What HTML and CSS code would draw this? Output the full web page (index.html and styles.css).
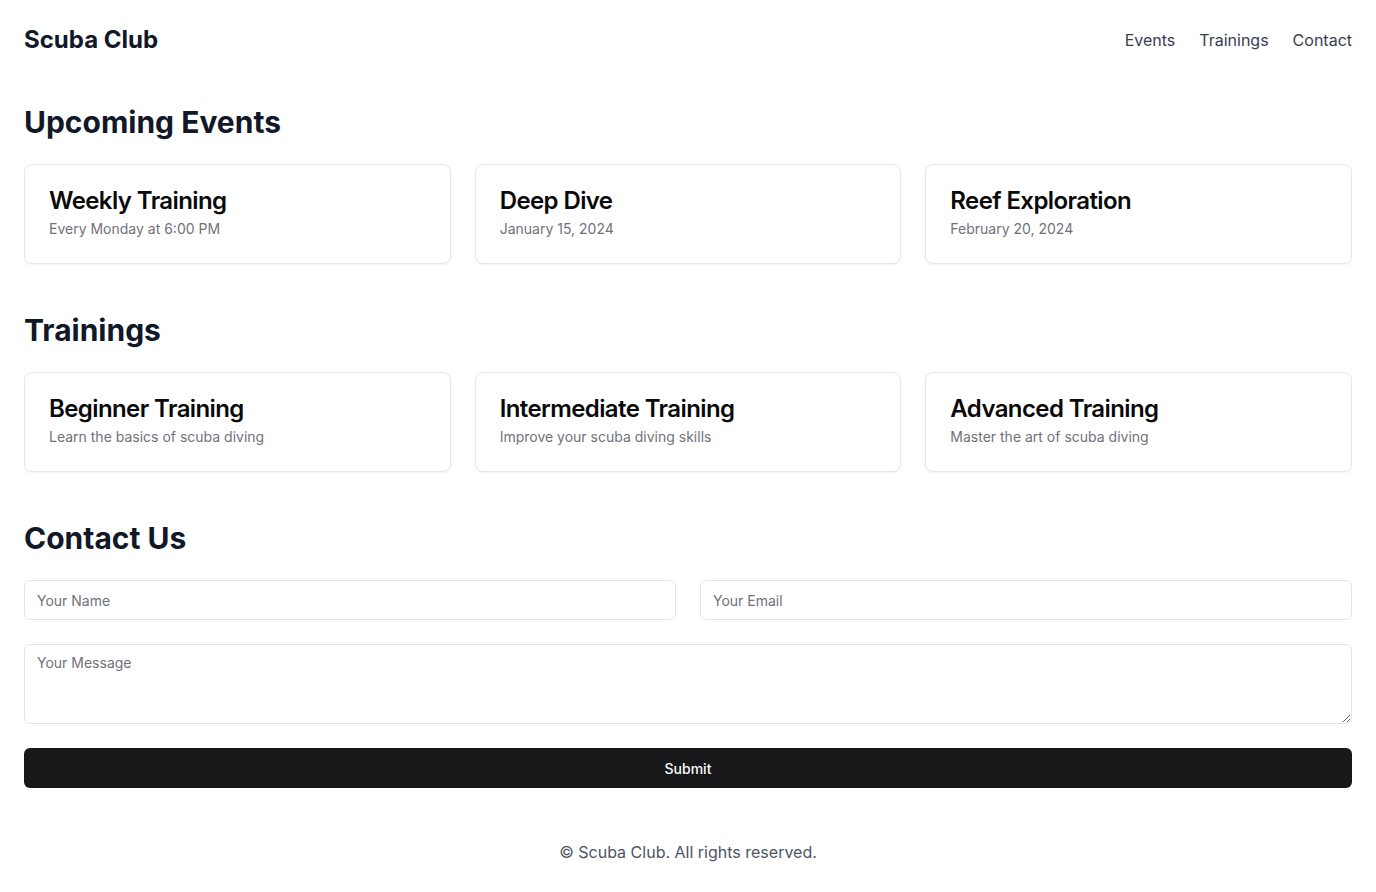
FILE: index.html
```html
<!DOCTYPE html>
<html lang="en">
<head>
<meta charset="utf-8">
<title>Scuba Club</title>
<link rel="stylesheet" href="styles.css">
</head>
<body>
<header class="site-header">
  <h1 class="brand">Scuba Club</h1>
  <nav class="nav">
    <a href="#events">Events</a>
    <a href="#trainings">Trainings</a>
    <a href="#contact">Contact</a>
  </nav>
</header>
<main class="main">
  <section class="section" id="events">
    <h2 class="section-title">Upcoming Events</h2>
    <div class="card-grid">
      <div class="card"><h3 class="card-title">Weekly Training</h3><p class="card-desc">Every Monday at 6:00 PM</p></div>
      <div class="card"><h3 class="card-title">Deep Dive</h3><p class="card-desc">January 15, 2024</p></div>
      <div class="card"><h3 class="card-title">Reef Exploration</h3><p class="card-desc">February 20, 2024</p></div>
    </div>
  </section>
  <section class="section" id="trainings">
    <h2 class="section-title">Trainings</h2>
    <div class="card-grid">
      <div class="card"><h3 class="card-title">Beginner Training</h3><p class="card-desc">Learn the basics of scuba diving</p></div>
      <div class="card"><h3 class="card-title">Intermediate Training</h3><p class="card-desc">Improve your scuba diving skills</p></div>
      <div class="card"><h3 class="card-title">Advanced Training</h3><p class="card-desc">Master the art of scuba diving</p></div>
    </div>
  </section>
  <section class="section" id="contact">
    <h2 class="section-title">Contact Us</h2>
    <form class="form">
      <div class="form-row">
        <input class="field" type="text" placeholder="Your Name">
        <input class="field" type="email" placeholder="Your Email">
      </div>
      <textarea class="field textarea" placeholder="Your Message"></textarea>
      <button class="submit" type="button">Submit</button>
    </form>
  </section>
</main>
<footer class="footer">
  <p>© Scuba Club. All rights reserved.</p>
</footer>
</body>
</html>
```
FILE: styles.css
```css
* { box-sizing: border-box; }
html, body { margin: 0; padding: 0; }
body {
  font-family: Inter, "Noto Sans", sans-serif;
  color: #111827;
  background: #ffffff;
}
.site-header {
  display: flex;
  justify-content: space-between;
  align-items: center;
  padding: 24px 24px;
}
.brand {
  margin: 0;
  font-size: 24px;
  line-height: 32px;
  font-weight: 700;
  color: #111827;
}
.nav {
  display: flex;
  gap: 24px;
}
.nav a {
  color: #374151;
  text-decoration: none;
  font-size: 16px;
  line-height: 24px;
}
.main {
  padding: 24px 24px 24px;
  display: flex;
  flex-direction: column;
  gap: 48px;
}
.section-title {
  margin: 0 0 24px;
  font-size: 30px;
  line-height: 36px;
  font-weight: 700;
  color: #111827;
}
.card-grid {
  display: grid;
  grid-template-columns: repeat(3, 1fr);
  gap: 24px;
}
.card {
  border: 1px solid #e5e7eb;
  border-radius: 8px;
  box-shadow: 0 1px 2px rgba(0,0,0,0.05);
  padding: 24px;
  background: #fff;
  display: flex;
  flex-direction: column;
  gap: 6px;
}
.card-title {
  margin: 0;
  font-size: 24px;
  line-height: 24px;
  font-weight: 600;
  color: #0a0a0a;
  letter-spacing: -0.6px;
}
.card-desc {
  margin: 0;
  font-size: 14px;
  line-height: 20px;
  color: #71717a;
}
.form {
  display: flex;
  flex-direction: column;
  gap: 24px;
}
.form-row {
  display: grid;
  grid-template-columns: 1fr 1fr;
  gap: 24px;
}
.field {
  font-family: Inter, "Noto Sans", sans-serif;
  font-size: 14px;
  height: 40px;
  padding: 8px 12px;
  border: 1px solid #e4e4e7;
  border-radius: 6px;
  color: #111827;
  background: #fff;
  width: 100%;
  outline: none;
}
.field::placeholder { color: #71717a; }
.textarea {
  height: 80px;
  resize: vertical;
  display: block;
  line-height: 20px;
}
.submit {
  height: 40px;
  border: none;
  border-radius: 6px;
  background: #18181b;
  color: #fafafa;
  font-family: Inter, "Noto Sans", sans-serif;
  font-size: 14px;
  font-weight: 500;
  width: 100%;
}
.footer {
  padding: 28px 24px 24px;
  text-align: center;
}
.footer p {
  margin: 0;
  font-size: 16px;
  line-height: 24px;
  color: #4b5563;
}
```
